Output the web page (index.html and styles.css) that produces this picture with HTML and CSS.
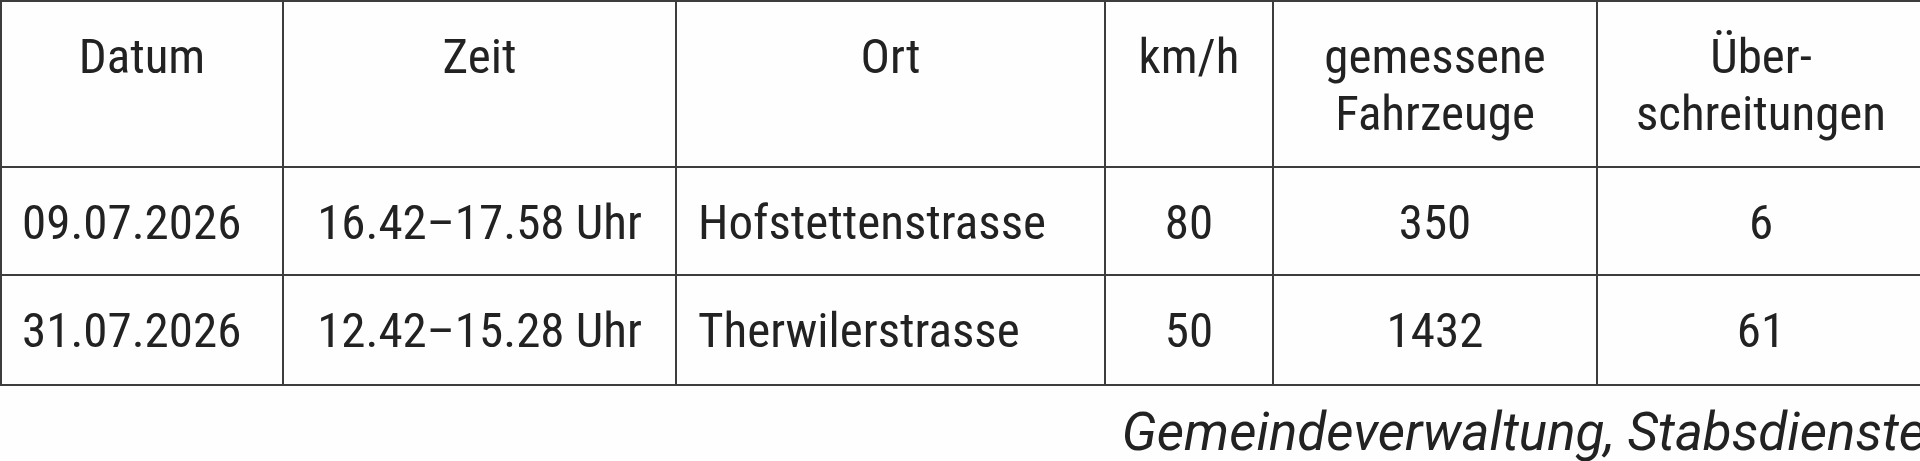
FILE: index.html
```html
<!DOCTYPE html>
<html lang="de">
<head>
<meta charset="utf-8">
<link rel="stylesheet" href="styles.css">
</head>
<body>
<div class="page">
  <table class="tbl">
    <colgroup>
      <col class="c-datum">
      <col class="c-zeit">
      <col class="c-ort">
      <col class="c-kmh">
      <col class="c-fz">
      <col class="c-ueb">
    </colgroup>
    <thead>
      <tr class="head">
        <th>Datum</th>
        <th>Zeit</th>
        <th>Ort</th>
        <th>km/h</th>
        <th>gemessene<br>Fahrzeuge</th>
        <th>Über-<br>schreitungen</th>
      </tr>
    </thead>
    <tbody>
      <tr class="row r1">
        <td class="left">09.07.2026</td>
        <td>16.42–17.58 Uhr</td>
        <td class="left ort">Hofstettenstrasse</td>
        <td>80</td>
        <td>350</td>
        <td>6</td>
      </tr>
      <tr class="row r2">
        <td class="left">31.07.2026</td>
        <td>12.42–15.28 Uhr</td>
        <td class="left ort">Therwilerstrasse</td>
        <td>50</td>
        <td>1432</td>
        <td>61</td>
      </tr>
    </tbody>
  </table>
  <p class="source">Gemeindeverwaltung, Stabsdienste</p>
</div>
</body>
</html>
```
FILE: styles.css
```css
html, body {
  margin: 0;
  padding: 0;
  background: #fefefe;
}

.page {
  width: 1920px;
  height: 461px;
  overflow: hidden;
  font-family: "Roboto Condensed", "Open Sans", sans-serif;
  color: #222;
}

.tbl {
  border-collapse: collapse;
  table-layout: fixed;
  width: 1924px;
}

.c-datum { width: 282px; }
.c-zeit { width: 393px; }
.c-ort { width: 429px; }
.c-kmh { width: 168px; }
.c-fz { width: 324px; }
.c-ueb { width: 328px; }

.tbl th,
.tbl td {
  border: 2px solid #3d3d3d;
  font-size: 49px;
  font-weight: 400;
  line-height: 57px;
  text-align: center;
  vertical-align: top;
  padding: 26px 0 0 0;
  white-space: nowrap;
}

.head th { height: 138px; }
.r1 td { height: 80px; }
.r2 td { height: 82px; }

.tbl td.left {
  text-align: left;
  padding-left: 20px;
}

.tbl td.ort {
  padding-left: 21px;
}

.source {
  margin: 13px -6px 0 0;
  font-family: "Roboto", "Open Sans", sans-serif;
  font-size: 53px;
  font-style: italic;
  line-height: 66px;
  text-align: right;
  white-space: nowrap;
}
```
